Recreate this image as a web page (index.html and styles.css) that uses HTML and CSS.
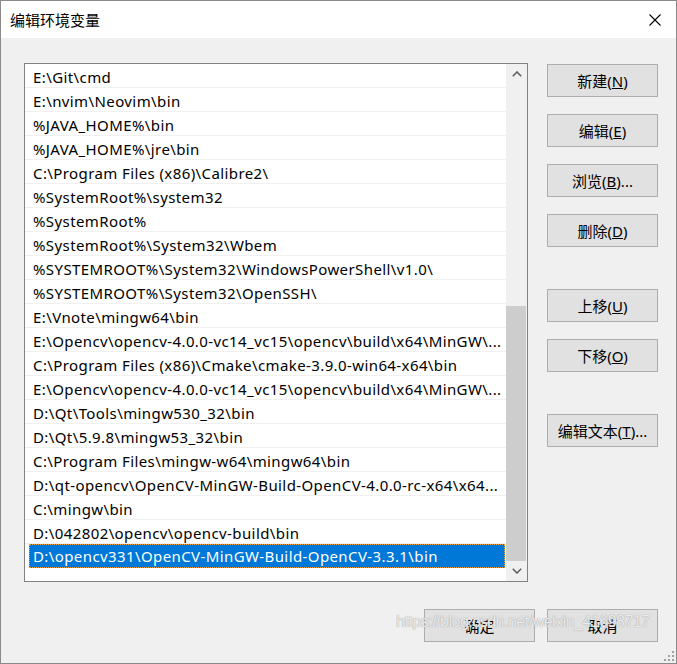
FILE: index.html
```html
<!DOCTYPE html>
<html>
<head>
  <meta charset="UTF-8">
  <title>编辑环境变量</title>
  <link rel="stylesheet" href="styles.css">
</head>
<body>
  <div class="window">
    <div class="titlebar">
      <span class="title">编辑环境变量</span>
      <svg class="close" width="12" height="12" viewBox="0 0 12 12">
        <path d="M0.5 0.5 L11.5 11.5 M11.5 0.5 L0.5 11.5" stroke="#000" stroke-width="1.1" fill="none"/>
      </svg>
    </div>

    <div class="main">
      <div class="top">
        <div class="listbox">
          <div class="rows">
            <div class="row">E:\Git\cmd</div>
            <div class="row">E:\nvim\Neovim\bin</div>
            <div class="row">%JAVA_HOME%\bin</div>
            <div class="row">%JAVA_HOME%\jre\bin</div>
            <div class="row">C:\Program Files (x86)\Calibre2\</div>
            <div class="row">%SystemRoot%\system32</div>
            <div class="row">%SystemRoot%</div>
            <div class="row">%SystemRoot%\System32\Wbem</div>
            <div class="row">%SYSTEMROOT%\System32\WindowsPowerShell\v1.0\</div>
            <div class="row">%SYSTEMROOT%\System32\OpenSSH\</div>
            <div class="row">E:\Vnote\mingw64\bin</div>
            <div class="row">E:\Opencv\opencv-4.0.0-vc14_vc15\opencv\build\x64\MinGW\...</div>
            <div class="row">C:\Program Files (x86)\Cmake\cmake-3.9.0-win64-x64\bin</div>
            <div class="row">E:\Opencv\opencv-4.0.0-vc14_vc15\opencv\build\x64\MinGW\...</div>
            <div class="row">D:\Qt\Tools\mingw530_32\bin</div>
            <div class="row">D:\Qt\5.9.8\mingw53_32\bin</div>
            <div class="row">C:\Program Files\mingw-w64\mingw64\bin</div>
            <div class="row">D:\qt-opencv\OpenCV-MinGW-Build-OpenCV-4.0.0-rc-x64\x64...</div>
            <div class="row">C:\mingw\bin</div>
            <div class="row">D:\042802\opencv\opencv-build\bin</div>
            <div class="row selected">D:\opencv331\OpenCV-MinGW-Build-OpenCV-3.3.1\bin</div>
          </div>
          <div class="scrollbar">
            <div class="arrow">
              <svg width="10" height="6" viewBox="0 0 10 6"><path d="M0.8 5.2 L5 1 L9.2 5.2" stroke="#606060" stroke-width="1.6" fill="none"/></svg>
            </div>
            <div class="track"><div class="thumb"></div></div>
            <div class="arrow">
              <svg width="10" height="6" viewBox="0 0 10 6"><path d="M0.8 0.8 L5 5 L9.2 0.8" stroke="#606060" stroke-width="1.6" fill="none"/></svg>
            </div>
          </div>
        </div>

        <div class="side">
          <button class="btn">新建(<u>N</u>)</button>
          <button class="btn">编辑(<u>E</u>)</button>
          <button class="btn">浏览(<u>B</u>)...</button>
          <button class="btn">删除(<u>D</u>)</button>
          <button class="btn group">上移(<u>U</u>)</button>
          <button class="btn">下移(<u>O</u>)</button>
          <button class="btn group">编辑文本(<u>T</u>)...</button>
        </div>
      </div>

      <div class="footer">
        <button class="btn">确定</button>
        <button class="btn">取消</button>
      </div>
    </div>

    <div class="watermark">https://blog.csdn.net/weixin_41698717</div>
    <svg class="grip" width="10" height="10" viewBox="0 0 10 10" fill="#a0a0a0">
      <rect x="8" y="0" width="2" height="2"/>
      <rect x="4" y="4" width="2" height="2"/><rect x="8" y="4" width="2" height="2"/>
      <rect x="0" y="8" width="2" height="2"/><rect x="4" y="8" width="2" height="2"/><rect x="8" y="8" width="2" height="2"/>
    </svg>
  </div>
</body>
</html>
```

FILE: styles.css
```css
body {
  margin: 0;
  font-family: "Noto Sans", "Noto Sans CJK SC", sans-serif;
  font-size: 15px;
  color: #000;
}

.window {
  position: relative;
  width: 677px;
  height: 664px;
  box-sizing: border-box;
  border: 1px solid #8a8a8a;
  background-color: #f0f0f0;
  display: flex;
  flex-direction: column;
  overflow: hidden;
}

.titlebar {
  height: 37px;
  background-color: #fff;
  display: flex;
  align-items: center;
  justify-content: space-between;
  padding: 0 15px 0 9px;
  flex-shrink: 0;
}

.title {
  font-family: "Noto Sans CJK SC", sans-serif;
  font-size: 15px;
}

.main {
  padding: 25px 18px 0 23px;
  display: flex;
  flex-direction: column;
}

.top {
  display: flex;
  gap: 19px;
}

.listbox {
  width: 504px;
  height: 519px;
  box-sizing: border-box;
  border: 1px solid #828282;
  background-color: #fff;
  display: flex;
}

.rows {
  flex: 1;
  min-width: 0;
}

.row {
  height: 24px;
  line-height: 22px;
  padding-top: 2px;
  box-sizing: border-box;
  border-bottom: 1px solid #f0f0f0;
  padding-left: 8px;
  letter-spacing: 0.4px;
  white-space: nowrap;
  overflow: hidden;
}

.row.selected {
  margin-left: 4px;
  margin-right: 1px;
  padding-left: 3px;
  padding-top: 1px;
  background-color: #0078d7;
  color: #fff;
  border: 1px dotted #f0a030;
  line-height: 21px;
}

.scrollbar {
  width: 21px;
  background-color: #f0f0f0;
  display: flex;
  flex-direction: column;
}

.arrow {
  height: 20px;
  display: flex;
  align-items: center;
  justify-content: center;
  flex-shrink: 0;
}

.track {
  flex: 1;
  display: flex;
  flex-direction: column;
  justify-content: flex-end;
}

.thumb {
  height: 255px;
  margin: 0 1px 0 0;
  background-color: #cdcdcd;
}

.side {
  display: flex;
  flex-direction: column;
  gap: 17px;
  padding-top: 1px;
}

.btn {
  width: 111px;
  height: 33px;
  box-sizing: border-box;
  border: 1px solid #adadad;
  background-color: #e1e1e1;
  font-family: "Noto Sans", "Noto Sans CJK SC", sans-serif;
  font-size: 15px;
  color: #000;
  padding: 0;
}

.btn.group {
  margin-top: 25px;
}

.footer {
  display: flex;
  justify-content: flex-end;
  gap: 12px;
  margin-top: 27px;
}

.watermark {
  position: absolute;
  left: 395px;
  top: 612px;
  font-family: "Liberation Sans", sans-serif;
  font-size: 16px;
  letter-spacing: -0.5px;
  color: rgba(255, 255, 255, 0.75);
  text-shadow: 0 0 1px #aaa, 0 0 1px #aaa;
  pointer-events: none;
}

.grip {
  position: absolute;
  right: 2px;
  bottom: 2px;
}
```
